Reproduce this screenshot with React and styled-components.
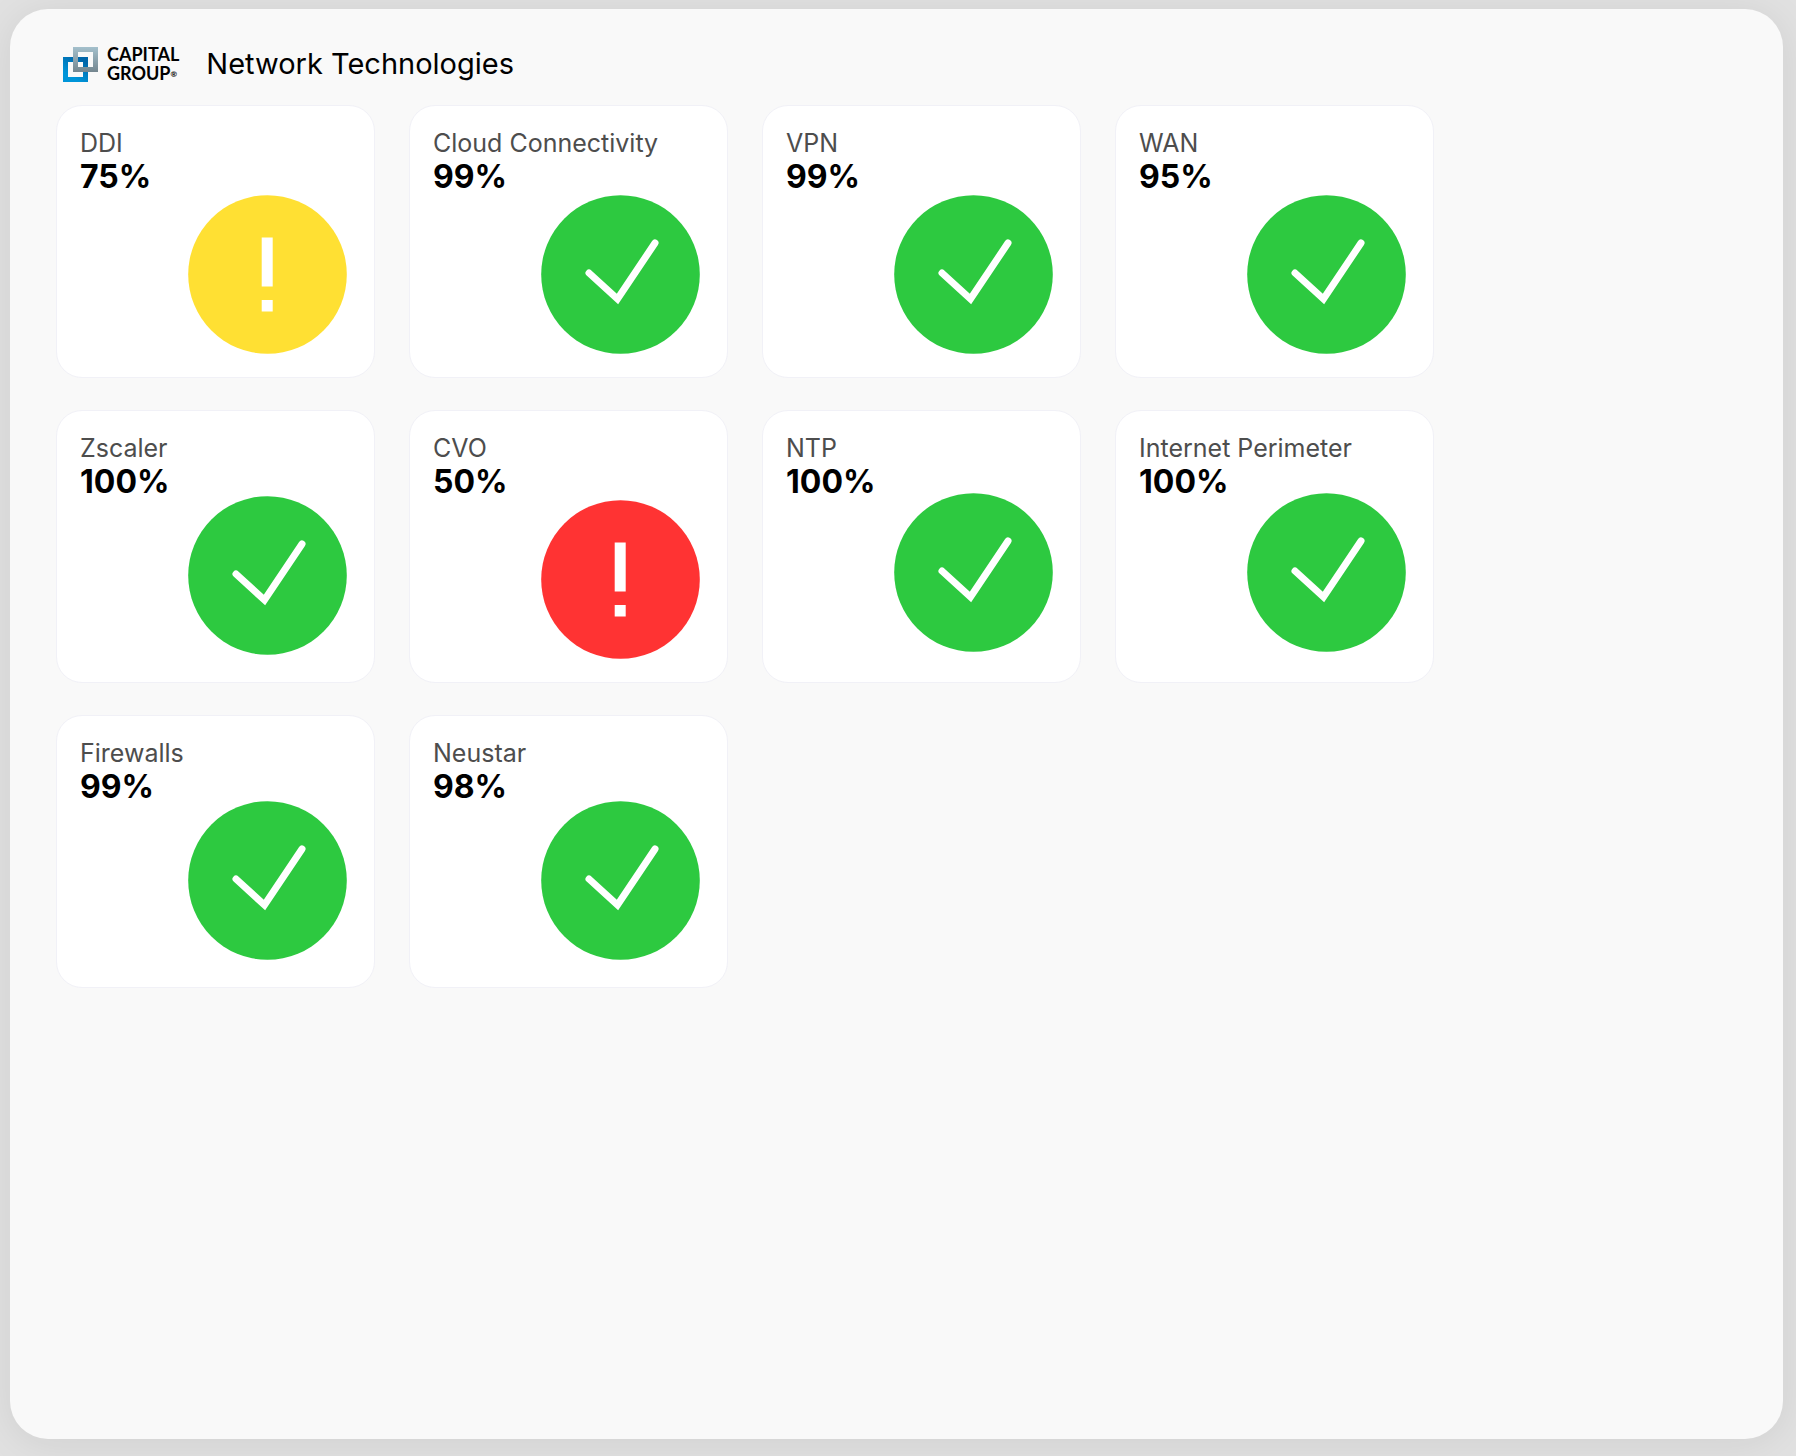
import React from "react";
import styled, { createGlobalStyle } from "styled-components";

const GlobalStyle = createGlobalStyle`
  *, *::before, *::after { box-sizing: border-box; }
  body {
    margin: 0;
    background: #e1e1e1;
    color: #000;
    font-family: Inter, "Liberation Sans", sans-serif;
  }
`;

const Page = styled.div`
  min-height: 100vh;
  display: flex;
  padding: 9px 13px 17px 10px;
`;

const Panel = styled.main`
  flex: 1;
  padding: 31px 46px;
  border-radius: 38px;
  background: #f9f9f9;
  box-shadow: 0 4px 40px rgba(0, 0, 0, 0.08);
`;

const Header = styled.header`
  display: flex;
  align-items: center;
  height: 48px;
  margin-bottom: 17px;
  padding-left: 7px;
`;

const Brand = styled.div`
  display: flex;
  align-items: center;
  gap: 9px;
  margin-right: 27px;
`;

const Mark = styled.svg`
  display: block;
  width: 35px;
  height: 35px;
`;

const BrandName = styled.div`
  display: flex;
  flex-direction: column;
  font: 700 18px/19px Lato, "Liberation Sans", sans-serif;
`;

const BrandLine = styled.span`
  display: flex;
  align-items: center;
`;

const Registered = styled.span`
  font-size: 8px;
  line-height: 8px;
`;

const Title = styled.h1`
  margin: 0;
  font-size: 29px;
  line-height: 36px;
  font-weight: 400;
`;

const CardGrid = styled.section`
  display: grid;
  grid-template-columns: repeat(auto-fill, 319px);
  gap: 32px 34px;
`;

const RAISE = { none: 23, medium: 27, high: 30 };

const Card = styled.article`
  display: flex;
  flex-direction: column;
  min-height: 273px;
  padding: 22px 27px ${(p) => RAISE[p.$raise]}px 23px;
  border: 1px solid #f1f1f7;
  border-radius: 26px;
  background: #fff;
`;

const Label = styled.h2`
  margin: 0 0 8px;
  color: #4d4d4d;
  font-size: 25px;
  line-height: 30px;
  font-weight: 400;
`;

const Value = styled.p`
  margin: 0;
  font-size: 32px;
  line-height: 22px;
  font-weight: 700;
`;

const StatusIcon = styled.svg`
  display: block;
  width: 159px;
  height: 159px;
  margin-top: auto;
  align-self: flex-end;
`;

const COLORS = { ok: "#2dc940", warning: "#ffe033", critical: "#ff3333" };

const TECHNOLOGIES = [
  { name: "DDI", value: "75%", status: "warning" },
  { name: "Cloud Connectivity", value: "99%", status: "ok" },
  { name: "VPN", value: "99%", status: "ok" },
  { name: "WAN", value: "95%", status: "ok" },
  { name: "Zscaler", value: "100%", status: "ok", raise: "medium" },
  { name: "CVO", value: "50%", status: "critical" },
  { name: "NTP", value: "100%", status: "ok", raise: "high" },
  { name: "Internet Perimeter", value: "100%", status: "ok", raise: "high" },
  { name: "Firewalls", value: "99%", status: "ok", raise: "medium" },
  { name: "Neustar", value: "98%", status: "ok", raise: "medium" },
];

function Status({ status }) {
  return (
    <StatusIcon viewBox="0 0 159 159" role="img" aria-label={status}>
      <circle cx="79.5" cy="79.5" r="79.3" fill={COLORS[status]} />
      {status === "ok" ? (
        <path
          d="M48 78 L76.5 104 L114 48"
          fill="none"
          stroke="#fff"
          strokeWidth="7"
          strokeLinecap="round"
        />
      ) : (
        <path d="M73.7 42.5h11v49h-11zM73.7 105h11v11.5h-11z" fill="#fff" />
      )}
    </StatusIcon>
  );
}

function Logo() {
  return (
    <Brand>
      <Mark viewBox="0 0 35 35" aria-hidden="true">
        <defs>
          <linearGradient id="blue" x1="0" y1="1" x2="0.6" y2="0">
            <stop offset="0.3" stopColor="#0095d9" />
            <stop offset="1" stopColor="#0065a8" />
          </linearGradient>
          <linearGradient id="steel" x1="0" y1="0" x2="0" y2="1">
            <stop offset="0" stopColor="#a4c0cc" />
            <stop offset="1" stopColor="#74868f" />
          </linearGradient>
        </defs>
        <path fill="url(#blue)" fillRule="evenodd" d="M0 10h25v25H0zM5 15v15h15v-15z" />
        <path fill="url(#steel)" fillRule="evenodd" d="M10 0h25v25H10zM15 5v15h15v-15z" />
      </Mark>
      <BrandName>
        <BrandLine>CAPITAL</BrandLine>
        <BrandLine>
          GROUP<Registered>®</Registered>
        </BrandLine>
      </BrandName>
    </Brand>
  );
}

export default function App() {
  return (
    <>
      <GlobalStyle />
      <Page>
        <Panel>
          <Header>
            <Logo />
            <Title>Network Technologies</Title>
          </Header>
          <CardGrid>
            {TECHNOLOGIES.map((t) => (
              <Card key={t.name} $raise={t.raise || "none"}>
                <Label>{t.name}</Label>
                <Value>{t.value}</Value>
                <Status status={t.status} />
              </Card>
            ))}
          </CardGrid>
        </Panel>
      </Page>
    </>
  );
}
